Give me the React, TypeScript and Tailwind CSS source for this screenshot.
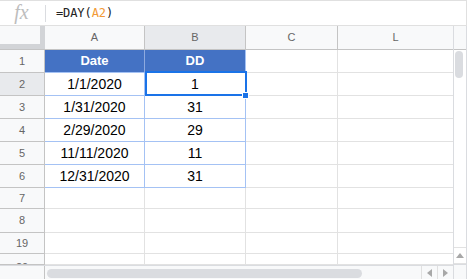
import React from "react";

type Row = { n: string; h: number; a?: string; b?: string; head?: boolean; table?: boolean; sel?: boolean; clip?: boolean };

const rows: Row[] = [
  { n: "1", h: 23, a: "Date", b: "DD", head: true, table: true },
  { n: "2", h: 23, a: "1/1/2020", b: "1", table: true, sel: true },
  { n: "3", h: 23, a: "1/31/2020", b: "31", table: true },
  { n: "4", h: 23, a: "2/29/2020", b: "29", table: true },
  { n: "5", h: 23, a: "11/11/2020", b: "11", table: true },
  { n: "6", h: 23, a: "12/31/2020", b: "31", table: true },
  { n: "7", h: 21 },
  { n: "8", h: 24 },
  { n: "19", h: 21 },
  { n: "20", h: 11, clip: true },
];

function Tri({ dir }: { dir: "up" | "down" | "left" | "right" }) {
  const pts =
    dir === "up" ? "0,5 8,5 4,0" : dir === "down" ? "0,0 8,0 4,5" : dir === "left" ? "5,0 5,8 0,4" : "0,0 0,8 5,4";
  const w = dir === "up" || dir === "down" ? 8 : 5;
  const h = dir === "up" || dir === "down" ? 5 : 8;
  return (
    <svg width={w} height={h} viewBox={`0 0 ${w} ${h}`}>
      <polygon points={pts} fill="#a8a8a8" />
    </svg>
  );
}

export default function App() {
  return (
    <div className="relative w-[471px] h-[279px] overflow-hidden bg-white font-['Liberation_Sans',Arial,sans-serif]">
      {/* formula bar */}
      <div className="flex h-[26px] w-[467px] items-center border-t border-b border-r border-[#e0e0e0] bg-white">
        <div className="flex w-[45px] items-center justify-center">
          <span className="font-['Liberation_Serif',serif] italic text-[20px] leading-none text-[#bdbdbd] -mt-[2px] pr-[2px]">fx</span>
        </div>
        <div className="h-[17px] w-px bg-[#dadce0]" />
        <div className="pl-[10px] font-['DejaVu_Sans_Mono',monospace] text-[12px] text-[#222] tracking-[-0.1px]">
          =DAY(<span className="text-[#f29a36]">A2</span>)
        </div>
      </div>

      <div className="flex">
        {/* main grid */}
        <div className="flex w-[453px] flex-col">
          {/* column header */}
          <div className="flex h-[24px] border-b border-[#c4c4c4] bg-[#f8f9fa] text-[11px] text-[#666]">
            <div className="relative w-[45px] bg-[#f8f9fa]">
              <div className="absolute right-0 top-0 h-full w-[5px] bg-[#d2d4d7]" />
              <div className="absolute bottom-0 left-0 h-[5px] w-full bg-[#d2d4d7]" />
            </div>
            <div className="flex w-[100px] items-center justify-center border-r border-[#c4c4c4]">A</div>
            <div className="flex w-[101px] items-center justify-center border-r border-[#c4c4c4] bg-[#e8eaed]">B</div>
            <div className="flex w-[92px] items-center justify-center border-r border-[#c4c4c4]">C</div>
            <div className="flex w-[115px] items-center justify-center">L</div>
          </div>

          {rows.map((r) => (
            <div key={r.n} className="flex overflow-hidden" style={{ height: r.h }}>
              <div
                className={`w-[45px] shrink-0 overflow-hidden border-r border-b border-[#c4c4c4] text-[11px] text-[#666] ${
                  r.sel ? "bg-[#e8eaed]" : "bg-[#f8f9fa]"
                }`}
              >
                <div className="flex h-[21px] items-center justify-center" style={{ marginTop: r.clip ? 3 : (r.h - 1 - 21) / 2 }}>
                  {r.n}
                </div>
              </div>
              {r.table ? (
                <>
                  <div
                    className={`flex w-[100px] shrink-0 items-center justify-center border-r border-b ${
                      r.head
                        ? "bg-[#4472c4] border-r-[#8eaadf] border-b-[#a4c2f4] text-[13px] font-bold text-white"
                        : "border-[#a4c2f4] text-[14px] text-black"
                    }`}
                  >
                    {r.a}
                  </div>
                  <div
                    className={`flex w-[101px] shrink-0 items-center justify-center border-r border-b ${
                      r.head
                        ? "bg-[#4472c4] border-r-[#a4c2f4] border-b-[#a4c2f4] text-[13px] font-bold text-white"
                        : "border-[#a4c2f4] text-[14px] text-black"
                    }`}
                  >
                    {r.b}
                  </div>
                </>
              ) : (
                <>
                  <div className="w-[100px] shrink-0 border-r border-b border-[#e2e2e2]" />
                  <div className="w-[101px] shrink-0 border-r border-b border-[#e2e2e2]" />
                </>
              )}
              <div className="w-[92px] shrink-0 border-r border-b border-[#e2e2e2]" />
              <div className="w-[115px] shrink-0 border-b border-[#e2e2e2]" />
            </div>
          ))}

          {/* horizontal scrollbar */}
          <div className="flex h-[15px] border-t border-[#dadce0] bg-[#f8f9fa]">
            <div className="w-[45px] shrink-0 border-r border-[#c4c4c4]" />
            <div className="flex w-[376px] shrink-0 items-center pl-[2px]">
              <div className="h-[9px] w-[315px] rounded-full bg-[#dadce0]" />
            </div>
            <div className="flex w-[16px] shrink-0 items-center justify-center border-l border-[#e0e0e0]">
              <Tri dir="left" />
            </div>
            <div className="flex w-[16px] shrink-0 items-center justify-center border-l border-[#e0e0e0]">
              <Tri dir="right" />
            </div>
          </div>
        </div>

        {/* vertical scrollbar */}
        <div className="flex h-[253px] w-[14px] flex-col border-l border-r border-[#dadce0]">
          <div className="h-[24px] shrink-0 border-b border-[#c4c4c4] bg-[#f8f9fa]" />
          <div className="flex-1 bg-white pl-[1px] pt-[1px]">
            <div className="h-[27px] w-[8px] rounded-full bg-[#dadce0]" />
          </div>
          <div className="flex h-[16px] shrink-0 items-center justify-center border-t border-[#e2e2e2] bg-white">
            <Tri dir="up" />
          </div>
          <div className="flex h-[16px] shrink-0 items-center justify-center border-t border-[#e2e2e2] bg-white">
            <Tri dir="down" />
          </div>
        </div>
      </div>

      {/* bottom-right corner */}
      <div className="absolute left-[453px] top-[264px] h-[15px] w-[14px] border-l border-r border-t border-[#dadce0] bg-[#f8f9fa]" />

      {/* selection overlay */}
      <div className="pointer-events-none absolute left-[145px] top-[71px] h-[25px] w-[102px] border-2 border-[#1a73e8]" />
      <div className="pointer-events-none absolute left-[242px] top-[92px] h-[7px] w-[7px] border border-white bg-[#1a73e8]" />
    </div>
  );
}
